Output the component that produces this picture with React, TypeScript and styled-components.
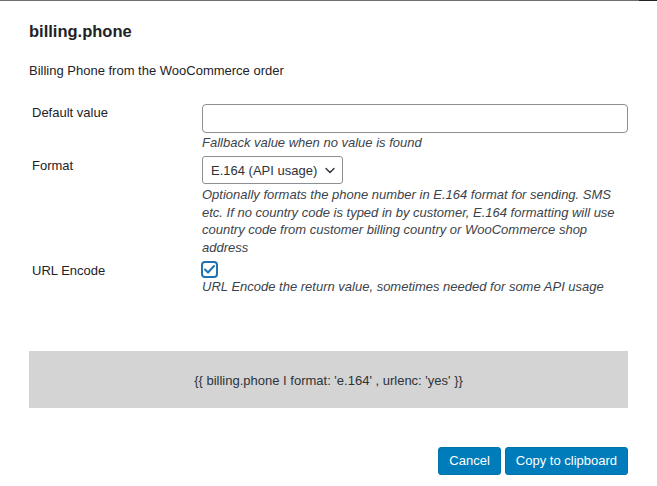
import React from 'react';
import styled, { createGlobalStyle } from 'styled-components';

const GlobalStyle = createGlobalStyle`
	html, body {
		margin: 0;
		padding: 0;
		background: #fff;
	}
	body {
		font-family: 'Liberation Sans', Arial, sans-serif;
		font-size: 13px;
		color: #1d2327;
	}
`;

const Frame = styled.div`
	width: 657px;
	height: 486px;
	overflow: hidden;
	display: flex;
	flex-direction: column;
`;

const EdgeBar = styled.div`
	display: flex;
	height: 1px;
	flex-shrink: 0;
`;

const EdgeSegment = styled.div<{ $dark?: boolean }>`
	flex: ${(p) => (p.$dark ? '0 0 18px' : '1')};
	background: ${(p) => (p.$dark ? '#1d2327' : '#6d6f72')};
`;

const Dialog = styled.div`
	padding: 20px 29px 0 29px;
	display: flex;
	flex-direction: column;
`;

const Title = styled.h2`
	margin: 0;
	font-size: 16.5px;
	font-weight: 700;
	line-height: 21px;
	color: #1d2327;
`;

const Intro = styled.p`
	margin: 20px 0 0;
	line-height: 17.5px;
	color: #1d2327;
`;

const FormGrid = styled.div`
	margin-top: 24px;
	display: grid;
	grid-template-columns: 173px 1fr;
`;

const Label = styled.div<{ $top?: number }>`
	padding-left: 3px;
	padding-top: ${(p) => p.$top ?? 0}px;
	line-height: 13px;
	color: #1d2327;
`;

const Field = styled.div<{ $gap?: number }>`
	display: flex;
	flex-direction: column;
	align-items: flex-start;
	margin-bottom: ${(p) => p.$gap ?? 0}px;
`;

const TextInput = styled.input`
	box-sizing: border-box;
	width: 100%;
	height: 29px;
	border: 1px solid #8c8f94;
	border-radius: 4px;
	background: #fff;
	padding: 0 8px;
	font: inherit;
	outline: none;
`;

const SelectBox = styled.div`
	box-sizing: border-box;
	height: 28px;
	display: flex;
	align-items: center;
	gap: 8px;
	padding: 0 7px 0 8px;
	border: 1px solid #8c8f94;
	border-radius: 3px;
	background: #fff;
	font-size: 13px;
	color: #2c3338;
	margin-top: -1px;
`;

const Description = styled.p<{ $top?: number }>`
	margin: ${(p) => p.$top ?? 1}px 0 0;
	font-style: italic;
	line-height: 17.5px;
	color: #3c434a;
`;

const CheckBox = styled.div`
	box-sizing: border-box;
	width: 17px;
	height: 17px;
	margin-left: -1px;
	border: 2px solid #2271b1;
	border-radius: 4px;
	display: flex;
	align-items: center;
	justify-content: center;
	background: #fff;
`;

const Preview = styled.div`
	margin-top: 55px;
	height: 57px;
	display: flex;
	align-items: center;
	justify-content: center;
	background: #d4d4d4;
	color: #2c3338;
	padding-top: 2px;
	box-sizing: border-box;
`;

const Footer = styled.div`
	margin-top: 39px;
	display: flex;
	justify-content: flex-end;
	gap: 4px;
`;

const Button = styled.button`
	height: 28px;
	padding: 0 10px;
	border: 1px solid #0073aa;
	border-radius: 3px;
	background: #007cba;
	color: #fff;
	font-family: 'Liberation Sans', Arial, sans-serif;
	font-size: 13px;
	line-height: 26px;
	cursor: pointer;
`;

const Chevron = () => (
	<svg width="10" height="7" viewBox="0 0 10 7" fill="none">
		<path d="M1 1.5l4 4 4-4" stroke="#2c3338" strokeWidth="1.4" strokeLinecap="round" strokeLinejoin="round" />
	</svg>
);

const Check = () => (
	<svg width="11" height="9" viewBox="0 0 11 9" fill="none">
		<path d="M1 4.5l3 3 6-6.5" stroke="#2271b1" strokeWidth="2" strokeLinecap="round" strokeLinejoin="round" />
	</svg>
);

const App: React.FC = () => (
	<>
		<GlobalStyle />
		<Frame>
			<EdgeBar>
				<EdgeSegment />
				<EdgeSegment $dark />
			</EdgeBar>
			<Dialog>
				<Title>billing.phone</Title>
				<Intro>Billing Phone from the WooCommerce order</Intro>
				<FormGrid>
					<Label $top={2}>Default value</Label>
					<Field $gap={6}>
						<TextInput type="text" />
						<Description>Fallback value when no value is found</Description>
					</Field>

					<Label $top={2}>Format</Label>
					<Field $gap={5}>
						<SelectBox>
							E.164 (API usage)
							<Chevron />
						</SelectBox>
						<Description $top={2}>
							Optionally formats the phone number in E.164 format for sending. SMS etc. If no country code is typed in
							by customer, E.164 formatting will use country code from customer billing country or WooCommerce shop
							address
						</Description>
					</Field>

					<Label $top={3}>URL Encode</Label>
					<Field>
						<CheckBox>
							<Check />
						</CheckBox>
						<Description $top={0}>URL Encode the return value, sometimes needed for some API usage</Description>
					</Field>
				</FormGrid>
				<Preview>{"{{ billing.phone I format: 'e.164' , urlenc: 'yes' }}"}</Preview>
				<Footer>
					<Button>Cancel</Button>
					<Button>Copy to clipboard</Button>
				</Footer>
			</Dialog>
		</Frame>
	</>
);

export default App;
